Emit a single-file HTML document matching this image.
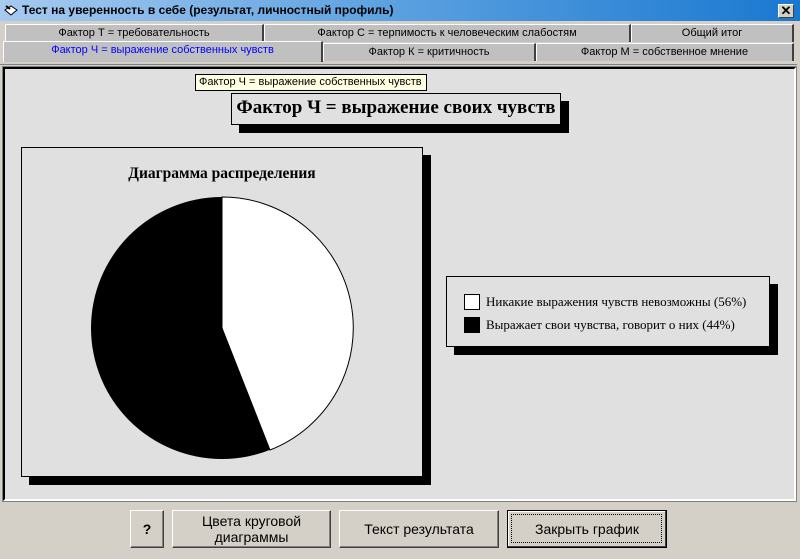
<!DOCTYPE html>
<html><head><meta charset="utf-8"><style>
*{margin:0;padding:0;box-sizing:border-box}
body{width:800px;height:559px;background:#d4d0c8;position:relative;overflow:hidden;font-family:"Liberation Sans",sans-serif;font-size:11px}
.abs{position:absolute}
.title{left:0;top:0;width:800px;height:21px;background:linear-gradient(90deg,#a6caf0 0%,#5aa0e0 50%,#1a78d0 100%);color:#000;font-weight:bold;font-size:12px;line-height:21px;padding-left:22px}
.tab{position:absolute;background:#c0c0c0;border-top:1px solid #fff;border-left:1px solid #fff;border-right:2px solid #404040;text-align:center;font-size:11px;color:#000;line-height:17px}
.btn{position:absolute;background:#d4d0c8;border:1px solid;border-color:#fff #404040 #404040 #fff;box-shadow:inset -1px -1px 0 #808080;text-align:center;font-size:14px;display:flex;align-items:center;justify-content:center;line-height:16px}
.panel{background:#e0e0e0;border:1px solid #000;box-shadow:8px 8px 0 #000}
.serif{font-family:"Liberation Serif",serif}
</style></head><body>
<div class="abs title">Тест на уверенность в себе (результат, личностный профиль)</div>
<svg class="abs" style="left:3px;top:3px" width="16" height="15"><path d="M2 7 L8 3 L14 7 L8 12 Z" fill="#fff" stroke="#000"/><path d="M3 3 L7 6" stroke="#000" stroke-width="2"/></svg>
<div class="abs" style="left:778px;top:4px;width:16px;height:14px;background:#d4d0c8;border:1px solid;border-color:#fff #404040 #404040 #fff;font-size:13px;line-height:12px;text-align:center;font-weight:bold">✕</div>
<div class="tab" style="left:5px;top:24px;width:259px;height:18px">Фактор Т = требовательность</div>
<div class="tab" style="left:264px;top:24px;width:367px;height:18px">Фактор С = терпимость к человеческим слабостям</div>
<div class="tab" style="left:631px;top:24px;width:163px;height:18px">Общий итог</div>
<div class="tab" style="left:3px;top:41px;width:320px;height:21px;color:#0000ff;line-height:16px">Фактор Ч = выражение собственных чувств</div>
<div class="tab" style="left:323px;top:43px;width:213px;height:18px">Фактор К = критичность</div>
<div class="tab" style="left:536px;top:43px;width:258px;height:18px">Фактор М = собственное мнение</div>
<div class="abs" style="left:0;top:62px;width:797px;height:3px;border-bottom:1px solid #808080"></div>
<div class="abs" style="left:3px;top:67px;width:793px;height:434px;background:#e0e0e0;border:2px solid #000;border-right-color:#fff;border-bottom-color:#fff;outline:1px solid #808080"></div>
<div class="abs panel serif" style="left:231px;top:93px;width:330px;height:32px;font-weight:bold;font-size:19px;text-align:center;line-height:28px;white-space:nowrap">Фактор Ч = выражение своих чувств</div>
<div class="abs" style="left:195px;top:74px;width:232px;height:17px;background:#ffffe1;border:1px solid #000;font-size:11px;line-height:15px;padding-left:3px">Фактор Ч = выражение собственных чувств</div>
<div class="abs panel serif" style="left:21px;top:147px;width:402px;height:330px">
<div style="text-align:center;font-weight:bold;font-size:15.5px;margin-top:17px">Диаграмма распределения</div>
</div>
<svg class="abs" style="left:0;top:0" width="800" height="559">
<circle cx="222" cy="328" r="131" fill="#000"/>
<path d="M222 328 L222 197 A131 131 0 0 1 270 450 Z" fill="#fff" stroke="#000"/>
</svg>
<div class="abs panel serif" style="left:446px;top:276px;width:324px;height:71px;font-size:13px">
<div style="position:absolute;left:17px;top:17px;width:16px;height:16px;border:1px solid #000;background:#fff"></div>
<div style="position:absolute;left:39px;top:17px">Никакие выражения чувств невозможны (56%)</div>
<div style="position:absolute;left:17px;top:40px;width:16px;height:16px;background:#000"></div>
<div style="position:absolute;left:39px;top:40px">Выражает свои чувства, говорит о них (44%)</div>
</div>
<div class="btn" style="left:130px;top:510px;width:34px;height:38px;font-weight:bold">?</div>
<div class="btn" style="left:172px;top:510px;width:159px;height:38px">Цвета круговой<br>диаграммы</div>
<div class="btn" style="left:339px;top:510px;width:160px;height:38px">Текст результата</div>
<div class="btn" style="left:507px;top:510px;width:160px;height:38px;border:1px solid #000;box-shadow:inset -1px -1px 0 #404040,inset 1px 1px 0 #fff">Закрыть график<div style="position:absolute;left:3px;top:3px;right:4px;bottom:4px;border:1px dotted #000"></div></div>
</body></html>
